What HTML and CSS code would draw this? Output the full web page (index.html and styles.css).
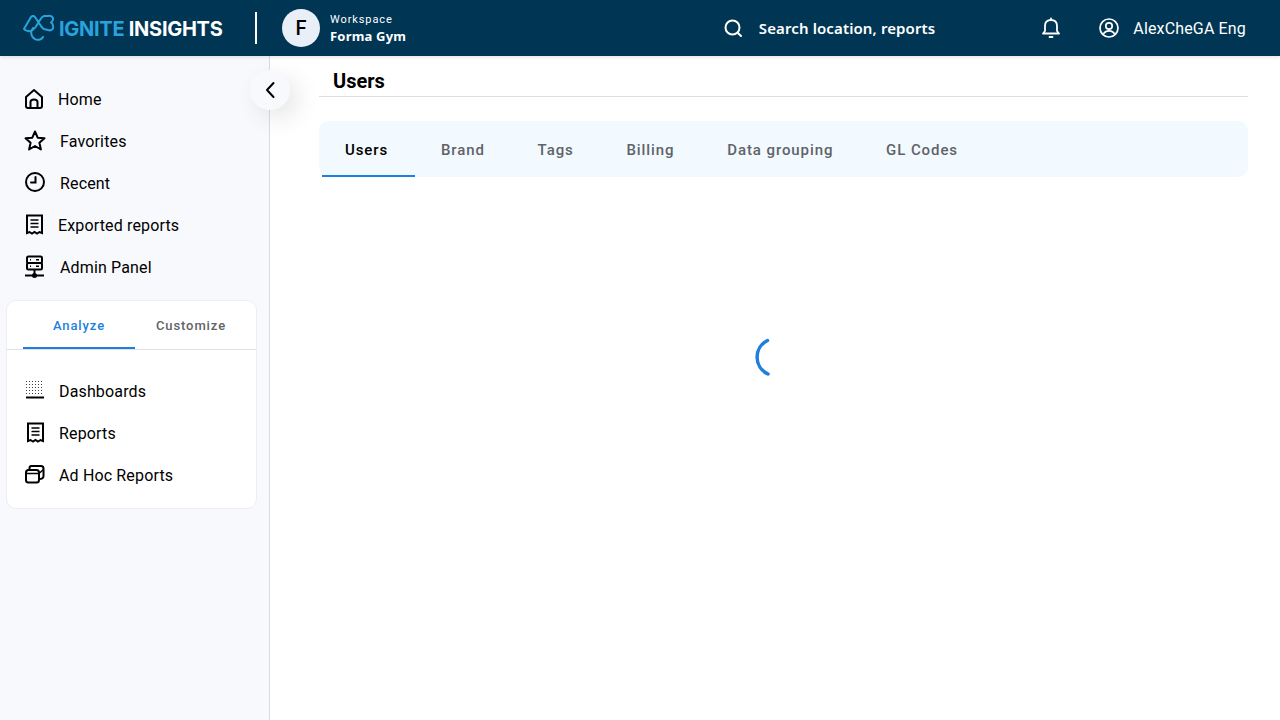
FILE: index.html
```html
<!DOCTYPE html>
<html lang="en">
<head>
  <meta charset="UTF-8">
  <meta name="viewport" content="width=device-width, initial-scale=1.0">
  <title>Users - Ignite Insights</title>
  <link rel="stylesheet" href="styles.css">
</head>
<body>
  <header class="topbar">
    <div class="brand">
      <svg class="brand-logo" width="32" height="28" viewBox="0 0 32 28" fill="none" stroke="#2aa3dc" stroke-width="2" stroke-linecap="round" stroke-linejoin="round">
        <path d="M1 15 L8 3 Q10 1 12 3 L18 12 Q20 15.500 23 15.500 L27 16.500 Q31 15.500 30 11.500 Q29.500 9 28 8.500 Q30.500 7 30 4 Q28.500 1 25 2 L21 2 Q19 2.500 17 6 L13 12.500 Q9 18 5 17 Q2 16.500 1 15 Z"/>
        <path d="M10 14 Q7 18 9 22 Q12 27 17 25.500 Q19 25 20 23"/>
      </svg>
      <span class="brand-name"><span class="brand-accent">IGNITE</span> INSIGHTS</span>
    </div>
    <div class="workspace">
      <div class="avatar">F</div>
      <div>
        <div class="workspace-label">Workspace</div>
        <div class="workspace-name">Forma Gym</div>
      </div>
    </div>
    <div class="search">
      <svg width="20" height="20" viewBox="0 0 20 20" fill="none" stroke="#fff" stroke-width="2" stroke-linecap="round">
        <circle cx="9.500" cy="9.500" r="7"/>
        <path d="M14.700 14.700 L18 18"/>
      </svg>
      <span>Search location, reports</span>
    </div>
    <svg class="bell" width="20" height="22" viewBox="0 0 20 22" fill="none" stroke="#fff" stroke-width="1.800" stroke-linecap="round" stroke-linejoin="round">
      <path d="M2 16.500 H18 L16 14 V9 Q16 3 10 3 Q4 3 4 9 V14 Z"/>
      <path d="M10 1.500 V3"/>
      <path d="M8.500 20 H11.500"/>
    </svg>
    <div class="account">
      <svg width="20" height="20" viewBox="0 0 20 20" fill="none" stroke="#fff" stroke-width="1.700">
        <circle cx="10" cy="10" r="9"/>
        <circle cx="10" cy="8" r="3.200"/>
        <path d="M4.500 16 Q6 12.800 10 12.800 Q14 12.800 15.500 16"/>
      </svg>
      <span>AlexCheGA Eng</span>
    </div>
  </header>

  <div class="layout">
    <aside class="sidebar">
      <button class="collapse" type="button" aria-label="Collapse">
        <svg width="12" height="18" viewBox="0 0 12 18" fill="none" stroke="#000" stroke-width="2" stroke-linecap="round" stroke-linejoin="round">
          <path d="M9.500 2 L3 9 L9.500 16"/>
        </svg>
      </button>
      <nav class="nav">
        <a class="nav-item">
          <svg width="22" height="24" viewBox="0 0 22 24" fill="none" stroke="#000" stroke-width="2" stroke-linejoin="round">
            <path d="M2 10 L10 3 L18 10 V19 Q18 21 16 21 H4 Q2 21 2 19 Z"/>
            <path d="M6.500 21 V15 Q6.500 12.500 10 12.500 Q13.500 12.500 13.500 15 V21"/>
          </svg>
          Home
        </a>
        <a class="nav-item">
          <svg width="24" height="24" viewBox="0 0 24 24" fill="none" stroke="#000" stroke-width="2" stroke-linejoin="round">
            <path d="M11 2.500 L13.700 8.700 L20.500 9.300 L15.400 13.800 L16.900 20.500 L11 17 L5.100 20.500 L6.600 13.800 L1.500 9.300 L8.300 8.700 Z"/>
          </svg>
          Favorites
        </a>
        <a class="nav-item">
          <svg width="24" height="24" viewBox="0 0 24 24" fill="none" stroke="#000" stroke-width="2" stroke-linecap="round">
            <circle cx="11" cy="11" r="9"/>
            <path d="M11.500 6 V11.500 H7"/>
          </svg>
          Recent
        </a>
        <a class="nav-item">
          <svg width="22" height="24" viewBox="0 0 22 24" fill="none" stroke="#000" stroke-width="2">
            <path d="M3 20 V2.500 H18 V20 L15.500 19 L13 20.500 L10.500 19 L8 20.500 L5.500 19 Z"/>
            <path d="M6.500 7 H14.500 M6.500 10.500 H14.500 M6.500 14 H14.500" stroke-width="1.500"/>
          </svg>
          Exported reports
        </a>
        <a class="nav-item">
          <svg width="24" height="24" viewBox="0 0 24 24" fill="none" stroke="#000" stroke-width="2">
            <rect x="3" y="1.500" width="15" height="6.500" rx="1.500"/>
            <rect x="3" y="8" width="15" height="6.500" rx="1.500"/>
            <path d="M10.500 14.500 V20 M1 20.500 H20"/>
            <circle cx="10.500" cy="20.500" r="1.500" fill="#000"/>
            <path d="M6 4.700 H7 M6 11.300 H7 M12 4.700 H15 M12 11.300 H15" stroke-width="1.500"/>
          </svg>
          Admin Panel
        </a>
      </nav>

      <section class="panel">
        <div class="panel-tabs">
          <div class="panel-tab panel-tab-active">Analyze</div>
          <div class="panel-tab">Customize</div>
        </div>
        <div class="panel-list">
          <a class="nav-item panel-item">
            <svg width="22" height="24" viewBox="0 0 22 24" fill="none" stroke="#000">
              <path d="M2 2.500 H20 M2 5.500 H20 M2 8.500 H20 M2 11.500 H20 M2 14.500 H20" stroke-dasharray="1 2" stroke-opacity="0.75"/>
              <path d="M2 18.500 H20" stroke-width="2"/>
            </svg>
            Dashboards
          </a>
          <a class="nav-item panel-item">
            <svg width="22" height="24" viewBox="0 0 22 24" fill="none" stroke="#000" stroke-width="2">
              <path d="M4 20 V2.500 H19 V20 L16.500 19 L14 20.500 L11.500 19 L9 20.500 L6.500 19 Z"/>
              <path d="M7.500 7 H15.500 M7.500 10.500 H15.500 M7.500 14 H15.500" stroke-width="1.500"/>
            </svg>
            Reports
          </a>
          <a class="nav-item panel-item">
            <svg width="22" height="24" viewBox="0 0 22 24" fill="none" stroke="#000" stroke-width="2" stroke-linejoin="round">
              <rect x="2" y="7" width="13" height="12.500" rx="2.500"/>
              <path d="M5.500 7 V5 Q5.500 3 7.500 3 H17 Q19.500 3 19.500 5.500 V13 Q19.500 16 15 16"/>
              <path d="M2 10.500 H15 L19.500 6.500" stroke-width="1.500"/>
            </svg>
            Ad Hoc Reports
          </a>
        </div>
      </section>
    </aside>

    <main class="content">
      <h1 class="page-title">Users</h1>
      <div class="tabs">
        <div class="tab tab-active">Users</div>
        <div class="tab">Brand</div>
        <div class="tab">Tags</div>
        <div class="tab">Billing</div>
        <div class="tab">Data grouping</div>
        <div class="tab">GL Codes</div>
      </div>
      <div class="loading">
        <svg width="40" height="40" viewBox="0 0 40 40" fill="none" stroke="#1e7fdc" stroke-width="3.500" stroke-linecap="round">
          <path d="M12.500 3.500 A18.500 18.500 0 0 0 13 37"/>
        </svg>
      </div>
    </main>
  </div>
</body>
</html>
```

FILE: styles.css
```css
/* page */
* {
  box-sizing: border-box;
}

body {
  margin: 0;
  height: 720px;
  overflow: hidden;
  background-color: #fff;
  color: #000;
  font-family: Roboto, sans-serif;
}

/* top bar */
.topbar {
  position: relative;
  z-index: 2;
  display: flex;
  align-items: center;
  height: 56px;
  padding: 0 34px 0 23px;
  background-color: #003554;
  box-shadow: 0 1px 4px rgba(0, 0, 0, 0.12);
  color: #fff;
}

.brand {
  display: flex;
  align-items: center;
  gap: 4px;
  width: 234px;
  height: 32px;
  border-right: 2px solid #fff;
}

.brand-name {
  padding-top: 2px;
  font-family: Inter, sans-serif;
  font-size: 20px;
  font-weight: 700;
  letter-spacing: -0.28px;
}

.brand-accent {
  color: #2aa3dc;
}

.workspace {
  display: flex;
  align-items: center;
  gap: 10px;
  margin-left: 25px;
}

.avatar {
  display: flex;
  align-items: center;
  justify-content: center;
  width: 38px;
  height: 38px;
  border-radius: 50%;
  background-color: #e9eff6;
  color: #000;
  font-size: 20px;
  font-weight: 500;
}

.workspace-label {
  font-size: 11px;
  letter-spacing: 0.9px;
  line-height: 17px;
}

.workspace-name {
  font-family: "Noto Sans", sans-serif;
  font-size: 13px;
  font-weight: 700;
  letter-spacing: 0.2px;
  line-height: 17px;
}

.search {
  display: flex;
  align-items: center;
  gap: 16px;
  margin-left: auto;
  font-family: "Noto Sans", sans-serif;
  font-size: 15px;
  font-weight: 600;
  letter-spacing: 0.12px;
}

.bell {
  margin-left: 106px;
}

.account {
  display: flex;
  align-items: center;
  gap: 14px;
  margin-left: 38px;
  font-size: 16px;
  letter-spacing: 0.15px;
}

/* sidebar */
.layout {
  display: flex;
  height: 664px;
}

.sidebar {
  position: relative;
  flex-shrink: 0;
  width: 270px;
  padding: 22px 12px 0 6px;
  background-color: #f8f9fd;
  border-right: 1px solid #d9dbe0;
}

.collapse {
  position: absolute;
  top: 14px;
  right: -21px;
  display: flex;
  align-items: center;
  justify-content: center;
  width: 40px;
  height: 40px;
  padding: 0;
  border: none;
  border-radius: 50%;
  background-color: #f8f9fd;
  box-shadow: 8px 8px 24px rgba(0, 0, 0, 0.1);
}

.nav-item {
  display: flex;
  align-items: center;
  gap: 12px;
  height: 42px;
  padding-left: 18px;
  font-size: 16px;
  letter-spacing: 0.15px;
}

.panel {
  margin-top: 12px;
  width: 251px;
  height: 209px;
  background-color: #fff;
  border: 1px solid #eceef3;
  border-radius: 10px;
}

.panel-tabs {
  display: flex;
  height: 49px;
  padding-left: 16px;
  border-bottom: 1px solid #dfe2e8;
}

.panel-tab {
  width: 112px;
  height: 48px;
  padding-top: 1px;
  text-align: center;
  line-height: 48px;
  font-size: 13px;
  font-weight: 500;
  letter-spacing: 0.9px;
  color: #5f6368;
}

.panel-tab-active {
  color: #1e7fdc;
  border-bottom: 2px solid #1e7fdc;
}

.panel-list {
  padding-top: 20px;
}

.panel-item {
  gap: 13px;
  padding-left: 17px;
}

/* main area */
.content {
  flex: 1;
  padding: 0 32px 0 49px;
}

.page-title {
  margin: 0;
  height: 41px;
  padding: 12px 0 0 14px;
  border-bottom: 1px solid #dedede;
  font-size: 20px;
  font-weight: 700;
  line-height: 27px;
}

.tabs {
  display: flex;
  height: 56px;
  margin-top: 24px;
  background-color: #f3faff;
  border-radius: 10px;
}

.tab {
  position: relative;
  padding: 0 26.35px;
  line-height: 58px;
  font-size: 15px;
  font-weight: 500;
  letter-spacing: 0.92px;
  color: #5f6368;
}

.tab:first-child {
  padding-left: 26px;
}

.tab-active {
  color: #000;
}

.tab-active::after {
  content: "";
  position: absolute;
  left: 3px;
  right: 0;
  bottom: 0;
  height: 2px;
  background-color: #1e7fdc;
}

.loading {
  display: flex;
  justify-content: center;
  margin: 160px -32px 0 -49px;
}
```
